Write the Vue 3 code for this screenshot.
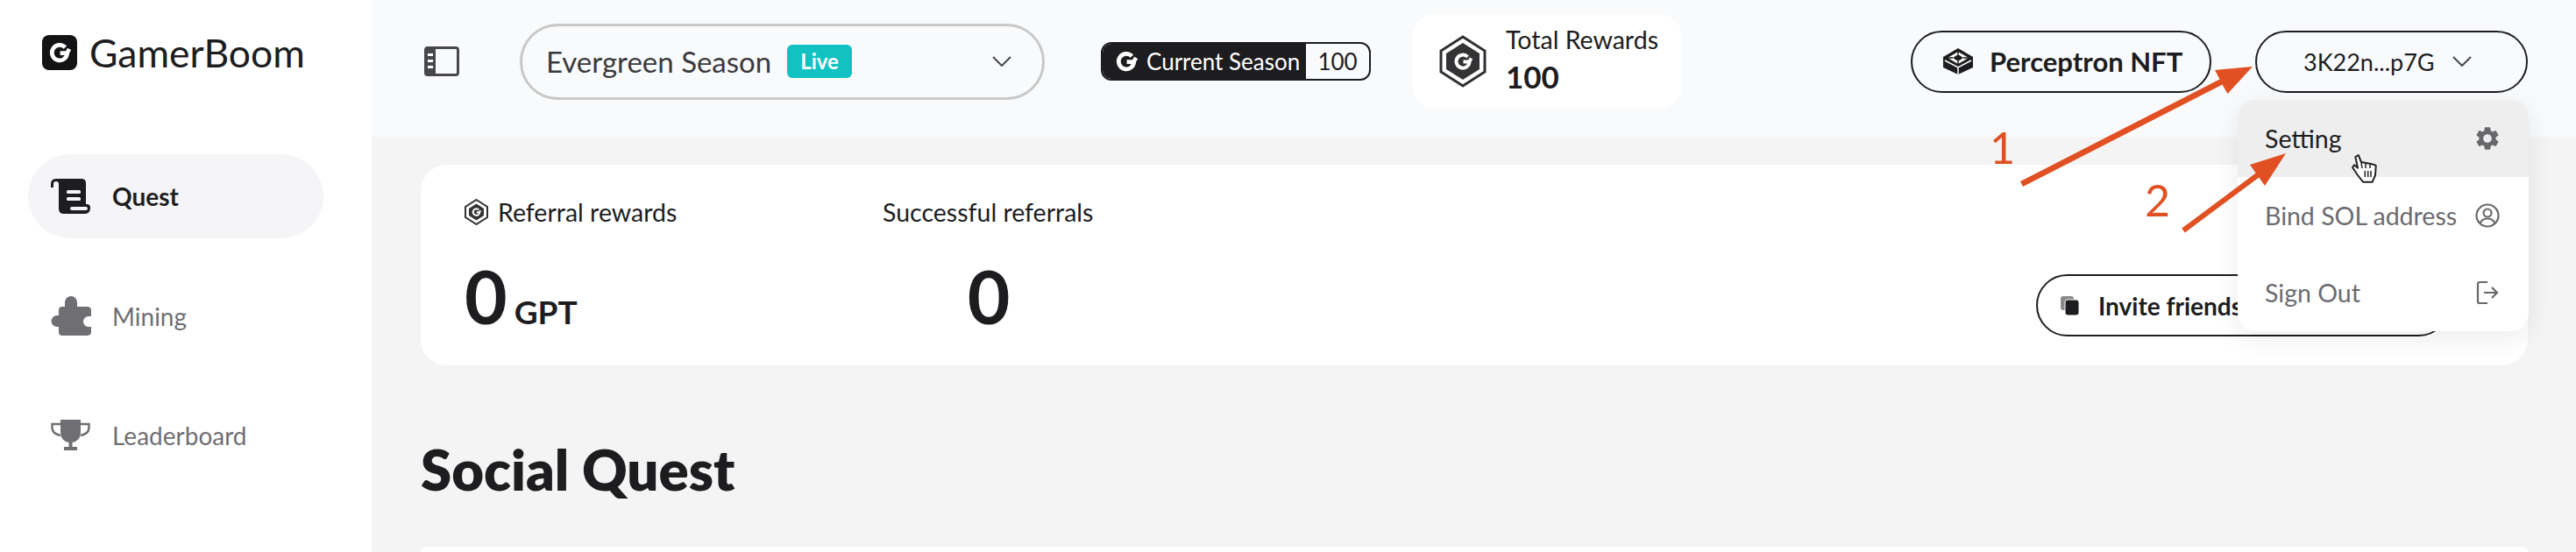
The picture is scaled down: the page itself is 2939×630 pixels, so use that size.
<template>
  <div class="page">
    <!-- Barra lateral -->
    <aside class="sidebar">
      <div class="logo">
        <span class="logo-box">
          <svg viewBox="0 0 24 24" width="28" height="28"><path :d="gMark" class="g-white" /></svg>
        </span>
        <span class="logo-text">GamerBoom</span>
      </div>
      <nav class="nav">
        <a v-for="item in navItems" :key="item.label" class="nav-item" :class="{ active: item.active }">
          <svg class="nav-icon" viewBox="0 0 46 46" width="46" height="46">
            <g v-if="item.icon === 'scroll'" transform="translate(0 3)">
              <path fill="#1d1d1f" d="M6 0H35Q40 0 40 5V29H41Q45 29 45 33Q45 40 39 40H15Q9 40 9 34V6Q9 3 6 3Q3 3 3 6V10H0V6Q0 0 6 0Z" />
              <rect x="18" y="13" width="16" height="4" rx="1.500" fill="#f5f5f7" />
              <rect x="18" y="21" width="16" height="4" rx="1.500" fill="#f5f5f7" />
              <rect x="22" y="32" width="20" height="4" rx="2" fill="#f5f5f7" />
            </g>
            <path v-else-if="item.icon === 'puzzle'" fill="#6f6e73" d="M9 12H16V7a7 7 0 0 1 14 0V12H41Q46 12 46 16V23H43a6 6 0 0 0 0 12H46V41Q46 45 41 45H13Q9 45 9 41V35H7a6.500 6.500 0 0 1 0-13H9V16Q9 12 13 12Z" />
            <g v-else transform="translate(0 5)">
              <path fill="#6f6e73" d="M11 0H34V14Q34 24 24.500 26V31H30V35H15V31H20.500V26Q11 24 11 14Z" />
              <path fill="none" stroke="#6f6e73" stroke-width="2.500" d="M11 5H1.500V9Q1.500 16 11 18M34 5H43.500V9Q43.500 16 34 18" />
            </g>
          </svg>
          <span>{{ item.label }}</span>
        </a>
      </nav>
    </aside>

    <div class="content">
      <!-- Cabecera -->
      <header class="topbar">
        <svg class="collapse" viewBox="0 0 40 34" width="40" height="34">
          <rect x="1.500" y="1.500" width="37" height="31" rx="2.500" fill="none" stroke="#48484b" stroke-width="3" />
          <rect x="1" y="1" width="12" height="32" rx="2" fill="#48484b" />
          <rect x="4" y="8" width="6" height="3" fill="#fff" />
          <rect x="4" y="15" width="6" height="3" fill="#fff" />
          <rect x="4" y="22" width="6" height="3" fill="#fff" />
        </svg>

        <div class="season-select">
          <span class="season-name">Evergreen Season</span>
          <span class="live">Live</span>
          <svg class="chev" viewBox="0 0 22 12" width="22" height="12"><path d="M1 1l10 10L21 1" fill="none" stroke="#48484b" stroke-width="2" /></svg>
        </div>

        <div class="season-badge">
          <span class="season-dark">
            <svg viewBox="0 0 24 24" width="28" height="28"><path :d="gMark" class="g-white" /></svg>
            Current Season
          </span>
          <span class="season-num">100</span>
        </div>

        <div class="rewards">
          <svg viewBox="0 0 54 60" width="54" height="60">
            <polygon points="27,2 52,18 52,42 27,58 2,42 2,18" fill="none" stroke="#2f2f31" stroke-width="3" />
            <polygon points="27,9 46,21 46,39 27,51 8,39 8,21" fill="#333335" />
            <g transform="translate(15 18)"><path :d="gMark" class="g-white" /></g>
          </svg>
          <div class="rewards-text">
            <span class="rewards-label">Total Rewards</span>
            <span class="rewards-num">100</span>
          </div>
        </div>

        <div class="actions">
          <button class="pill nft">
            <svg viewBox="0 0 34 30" width="34" height="30">
              <polygon points="17,0 34,10 34,22 17,30 0,22 0,10" fill="#1d1d1f" />
              <polygon points="17,4 29,11 17,18 5,11" fill="#fff" />
              <polygon points="17,7 23,11 17,15 11,11" fill="#1d1d1f" />
              <path d="M17 4v3M17 15v3M5 11h6M23 11h6" stroke="#1d1d1f" stroke-width="1.500" />
              <path d="M2 14l15 8 15-8M17 22v8" fill="none" stroke="#fff" stroke-width="1.500" />
            </svg>
            Perceptron NFT
          </button>
          <button class="pill wallet">
            3K22n...p7G
            <svg viewBox="0 0 22 12" width="22" height="12"><path d="M1 1l10 10L21 1" fill="none" stroke="#48484b" stroke-width="2" /></svg>
          </button>
        </div>
      </header>

      <main class="main">
        <section class="stats-card">
          <div class="stat first">
            <div class="stat-label">
              <svg viewBox="0 0 54 60" width="27" height="30">
                <polygon points="27,2 52,18 52,42 27,58 2,42 2,18" fill="none" stroke="#2f2f31" stroke-width="4" />
                <polygon points="27,11 44,22 44,38 27,49 10,38 10,22" fill="#333335" />
                <g transform="translate(15 18)"><path :d="gMark" class="g-white" /></g>
              </svg>
              Referral rewards
            </div>
            <div class="stat-value">0<small>GPT</small></div>
          </div>
          <div class="stat second">
            <div class="stat-label">Successful referrals</div>
            <div class="stat-value">0</div>
          </div>
          <button class="pill invite">
            <svg viewBox="0 0 22 22" width="22" height="22">
              <rect x="0" y="0" width="15" height="16" rx="3" fill="#8a8a8d" />
              <rect x="5" y="4" width="16" height="18" rx="3" fill="#1d1d1f" stroke="#fff" stroke-width="1" />
            </svg>
            Invite friends
          </button>
        </section>

        <h2 class="section-title">Social Quest</h2>
        <section class="quest-card"></section>
      </main>
    </div>

    <!-- Menú desplegable de la cartera -->
    <ul class="dropdown">
      <li class="hovered">
        <span>Setting</span>
        <svg viewBox="0 0 24 24" width="32" height="32"><path fill="#68686c" :d="gear" /></svg>
      </li>
      <li>
        <span>Bind SOL address</span>
        <svg viewBox="0 0 28 28" width="28" height="28" fill="none" stroke="#68686c" stroke-width="2.200">
          <circle cx="14" cy="14" r="12.500" />
          <circle cx="14" cy="11" r="4.500" />
          <path d="M5.500 23c1.500-4 5-5.500 8.500-5.500s7 1.500 8.500 5.500" />
        </svg>
      </li>
      <li>
        <span>Sign Out</span>
        <svg viewBox="0 0 28 28" width="28" height="28" fill="none" stroke="#68686c" stroke-width="2.200">
          <path d="M14 2H5Q3 2 3 4V24Q3 26 5 26H14" />
          <path d="M10 14H25M19 8l6 6-6 6" />
        </svg>
      </li>
    </ul>

    <!-- Anotaciones encima de la captura -->
    <svg class="marks" viewBox="0 0 2939 630" width="2939" height="630">
      <polygon class="hand" points="2687.300,179 2690.700,177 2694,185 2698.300,185.700 2703.300,186.700 2707.700,187.700 2710.700,189 2710,200 2706.700,207.700 2696,207.700 2690,200 2684,191 2686,188.300 2690,191.700" />
      <path class="hand-lines" d="M2694 186l1 6M2699 187v5M2704 188v4M2698.300 195v7M2701.700 195v7M2705 195v7" />
      <polygon class="arrow-fill" points="2305,207.100 2532.500,90.600 2527,80 2570,76 2541.500,107 2535.500,96.400 2308,212.900" />
      <polygon class="arrow-fill" points="2489.200,260.600 2573.700,197.600 2567,188 2608,175 2584,212 2577.300,202.400 2492.800,265.400" />
    </svg>
    <span class="mark-num one">1</span>
    <span class="mark-num two">2</span>
  </div>
</template>

<script setup>
const navItems = [
  { label: 'Quest', icon: 'scroll', active: true },
  { label: 'Mining', icon: 'puzzle' },
  { label: 'Leaderboard', icon: 'trophy' },
];

// Marca de la G que se repite en logo, insignia y hexágonos
const gMark = 'M17.500 7A7.500 7.500 0 1 0 19.500 12.500H12.500M19 13L21.500 8.500';

const gear =
  'M19.14 12.94c.04-.3.06-.61.06-.94 0-.32-.02-.64-.07-.94l2.03-1.58c.18-.14.23-.41.12-.61l-1.92-3.32c-.12-.22-.37-.29-.59-.22l-2.39.96c-.5-.38-1.03-.7-1.62-.94l-.36-2.54c-.04-.24-.24-.41-.48-.41h-3.84c-.24 0-.43.17-.47.41l-.36 2.54c-.59.24-1.13.57-1.62.94l-2.39-.96c-.22-.08-.47 0-.59.22L2.74 8.87c-.12.21-.08.47.12.61l2.03 1.58c-.05.3-.09.63-.09.94s.02.64.07.94l-2.03 1.58c-.18.14-.23.41-.12.61l1.92 3.32c.12.22.37.29.59.22l2.39-.96c.5.38 1.03.7 1.62.94l.36 2.54c.05.24.24.41.48.41h3.84c.24 0 .44-.17.47-.41l.36-2.54c.59-.24 1.13-.56 1.62-.94l2.39.96c.22.08.47 0 .59-.22l1.92-3.32c.12-.22.07-.47-.12-.61l-2.01-1.58zM12 15.6c-1.98 0-3.6-1.62-3.6-3.6s1.62-3.6 3.6-3.6 3.6 1.62 3.6 3.6-1.62 3.6-3.6 3.6z';
</script>

<style>
html,
body {
  margin: 0;
  background: #f4f4f4;
  overflow: hidden;
}
</style>

<style scoped>
.page {
  position: relative;
  display: flex;
  width: 2939px;
  height: 630px;
  overflow: hidden;
  font-family: Lato, "Noto Sans", sans-serif;
  color: #1d1d1f;
}

.g-white {
  fill: none;
  stroke: #fff;
  stroke-width: 4;
}

/* Barra lateral */
.sidebar {
  flex: 0 0 424px;
  background: #fff;
  padding: 40px 55px 0 32px;
  box-sizing: border-box;
}

.logo {
  display: flex;
  align-items: center;
  gap: 14px;
  margin-left: 16px;
  height: 40px;
}

.logo-box {
  display: flex;
  align-items: center;
  justify-content: center;
  width: 40px;
  height: 40px;
  border-radius: 8px;
  background: #131315;
}

.logo-text {
  font-size: 44.500px;
  line-height: 40px;
  font-weight: 400;
}

.nav {
  display: flex;
  flex-direction: column;
  gap: 40.500px;
  margin-top: 96px;
}

.nav-item {
  display: flex;
  align-items: center;
  gap: 24px;
  height: 96px;
  padding-left: 26px;
  border-radius: 48px;
  font-size: 28px;
  color: #6f6e73;
}

.nav-item.active {
  background: #f5f5f7;
  color: #1d1d1f;
  font-weight: 700;
}

/* Cabecera */
.content {
  flex: 1;
  display: flex;
  flex-direction: column;
  min-width: 0;
}

.topbar {
  flex: none;
  display: flex;
  align-items: center;
  height: 156px;
  padding: 0 55px 16px 60px;
  box-sizing: border-box;
  background: #f9fafc;
}

.collapse {
  margin-right: 69px;
}

.season-select {
  display: flex;
  align-items: center;
  width: 599px;
  height: 87px;
  padding: 0 35px 0 27px;
  box-sizing: border-box;
  border: 3px solid #c8c8c8;
  border-radius: 44px;
  margin-right: 64px;
}

.season-name {
  font-size: 33px;
  color: #3a3a3d;
}

.live {
  margin-left: 18px;
  padding: 0 15px;
  height: 38px;
  line-height: 38px;
  border-radius: 6px;
  background: #12c2c2;
  color: #fff;
  font-size: 24px;
  font-weight: 700;
}

.chev {
  margin-left: auto;
}

.season-badge {
  display: flex;
  width: 308px;
  height: 44px;
  margin-right: 48px;
  border: 2px solid #1d1d1f;
  border-radius: 12px;
  box-sizing: border-box;
  overflow: hidden;
  font-size: 26px;
}

.season-dark {
  display: flex;
  align-items: center;
  gap: 9px;
  flex: 0 0 232px;
  padding-left: 13px;
  box-sizing: border-box;
  background: #1d1d1f;
  color: #fff;
}

.season-num {
  flex: 1;
  text-align: center;
  line-height: 40px;
}

.rewards {
  display: flex;
  align-items: center;
  gap: 22px;
  width: 306px;
  height: 108px;
  padding-left: 30px;
  box-sizing: border-box;
  background: #fff;
  border-radius: 24px;
}

.rewards-text {
  display: flex;
  flex-direction: column;
  gap: 5px;
  margin-bottom: 6px;
}

.rewards-label {
  font-size: 28.500px;
  line-height: 34px;
}

.rewards-num {
  font-size: 35px;
  line-height: 40px;
  font-weight: 700;
}

.actions {
  display: flex;
  gap: 50px;
  margin-left: auto;
}

.pill {
  display: flex;
  align-items: center;
  height: 71px;
  padding: 0;
  box-sizing: border-box;
  border: 2px solid #1d1d1f;
  border-radius: 36px;
  background: transparent;
  font-family: inherit;
  color: #1d1d1f;
}

.nft {
  width: 343px;
  gap: 19px;
  padding-left: 35px;
  font-size: 31px;
  font-weight: 700;
}

.wallet {
  width: 311px;
  gap: 20px;
  padding-left: 53px;
  font-size: 27px;
}

/* Contenido principal */
.main {
  flex: 1;
  min-height: 0;
  display: flex;
  flex-direction: column;
  padding: 32px 55px 0 56px;
  background: #f4f4f4;
}

.stats-card {
  flex: none;
  display: flex;
  align-items: flex-start;
  height: 229px;
  padding: 36px 0 0 50px;
  box-sizing: border-box;
  background: #fff;
  border-radius: 30px;
}

.stat-label {
  display: flex;
  align-items: center;
  gap: 11px;
  height: 36px;
  font-size: 28.500px;
  white-space: nowrap;
}

.stat-value {
  margin-top: 36px;
  font-size: 84px;
  line-height: 84px;
  font-weight: 700;
}

.stat-value small {
  margin-left: 8px;
  font-size: 37px;
  font-weight: 700;
}

.first {
  width: 477px;
}

.second {
  width: 242px;
  text-align: center;
}

.invite {
  gap: 21px;
  width: 472px;
  margin: 89px 89px 0 auto;
  padding-left: 26px;
  background: #fff;
  font-size: 28px;
  font-weight: 700;
}

.section-title {
  flex: none;
  margin: 0;
  margin-top: 83px;
  font-size: 63.500px;
  line-height: 72px;
  font-weight: 800;
}

.quest-card {
  flex: 1;
  margin-top: 52px;
  background: #fff;
  border-radius: 30px 30px 0 0;
}

/* Menú desplegable */
.dropdown {
  position: absolute;
  left: 2553px;
  top: 114px;
  width: 332px;
  margin: 0;
  padding: 0;
  list-style: none;
  background: #fff;
  border-radius: 20px;
  overflow: hidden;
  box-shadow: 0 8px 30px rgba(0, 0, 0, 0.08);
  font-size: 28.500px;
  color: #6b6b70;
}

.dropdown li {
  display: flex;
  align-items: center;
  justify-content: space-between;
  height: 88px;
  padding: 0 33px 0 31px;
}

.dropdown li.hovered {
  background: #eeeeee;
  color: #1d1d1f;
  padding-right: 31px;
}

/* Flechas y números */
.marks {
  position: absolute;
  left: 0;
  top: 0;
  pointer-events: none;
}

.arrow-fill {
  fill: #e05022;
}

.hand {
  fill: #fff;
  stroke: #222;
  stroke-width: 2;
  stroke-linejoin: round;
}

.hand-lines {
  fill: none;
  stroke: #222;
  stroke-width: 1.500;
}

.mark-num {
  position: absolute;
  font-size: 50px;
  line-height: 50px;
  font-weight: 400;
  color: #e05022;
}

.one {
  left: 2270px;
  top: 143px;
}

.two {
  left: 2447px;
  top: 203px;
}
</style>
